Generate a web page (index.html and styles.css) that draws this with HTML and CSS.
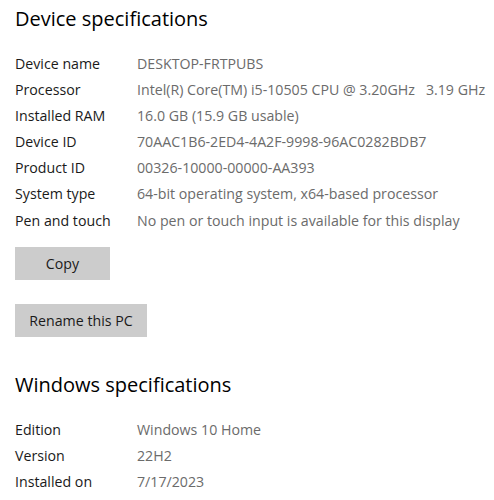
FILE: index.html
```html
<!DOCTYPE html>
<html>
<head>
<meta charset="utf-8">
<link rel="stylesheet" href="styles.css">
</head>
<body>
<div class="page">
  <h2 class="title">Device specifications</h2>
  <div class="specs">
    <div class="row"><span class="label">Device name</span><span class="value">DESKTOP-FRTPUBS</span></div>
    <div class="row"><span class="label">Processor</span><span class="value">Intel(R) Core(TM) i5-10505 CPU @ 3.20GHz&nbsp;&nbsp;&nbsp;3.19 GHz</span></div>
    <div class="row"><span class="label">Installed RAM</span><span class="value">16.0 GB (15.9 GB usable)</span></div>
    <div class="row"><span class="label">Device ID</span><span class="value">70AAC1B6-2ED4-4A2F-9998-96AC0282BDB7</span></div>
    <div class="row"><span class="label">Product ID</span><span class="value">00326-10000-00000-AA393</span></div>
    <div class="row"><span class="label">System type</span><span class="value">64-bit operating system, x64-based processor</span></div>
    <div class="row"><span class="label">Pen and touch</span><span class="value">No pen or touch input is available for this display</span></div>
  </div>
  <div class="buttons">
    <button class="btn btn-copy">Copy</button>
    <button class="btn btn-rename">Rename this PC</button>
  </div>
  <h2 class="title title-win">Windows specifications</h2>
  <div class="specs">
    <div class="row"><span class="label">Edition</span><span class="value">Windows 10 Home</span></div>
    <div class="row"><span class="label">Version</span><span class="value">22H2</span></div>
    <div class="row"><span class="label">Installed on</span><span class="value">7/17/2023</span></div>
  </div>
</div>
</body>
</html>
```
FILE: styles.css
```css
html, body {
  margin: 0;
  padding: 0;
  background: #fff;
}
.page {
  padding: 3px 0 0 15px;
  font-family: "Open Sans", "Noto Sans", sans-serif;
  color: #1a1a1a;
}
.title {
  margin: 0;
  font-size: 20px;
  font-weight: 400;
  line-height: 32px;
  color: #000;
}
.specs {
  margin-top: 15px;
  display: flex;
  flex-direction: column;
}
.row {
  display: grid;
  grid-template-columns: 122px 1fr;
  height: 26.17px;
  align-items: center;
  font-size: 14.2px;
  white-space: nowrap;
}
.label {
  color: #1a1a1a;
}
.value {
  color: #6b6b6b;
}
.buttons {
  margin-top: 14px;
  display: flex;
  flex-direction: column;
  align-items: flex-start;
  gap: 24px;
}
.btn {
  border: none;
  background: #cccccc;
  font-family: inherit;
  font-size: 14.2px;
  color: #1a1a1a;
  height: 33px;
  padding: 0;
}
.btn-copy {
  width: 95px;
}
.btn-rename {
  width: 132px;
}
.title-win {
  margin-top: 32px;
}
```
